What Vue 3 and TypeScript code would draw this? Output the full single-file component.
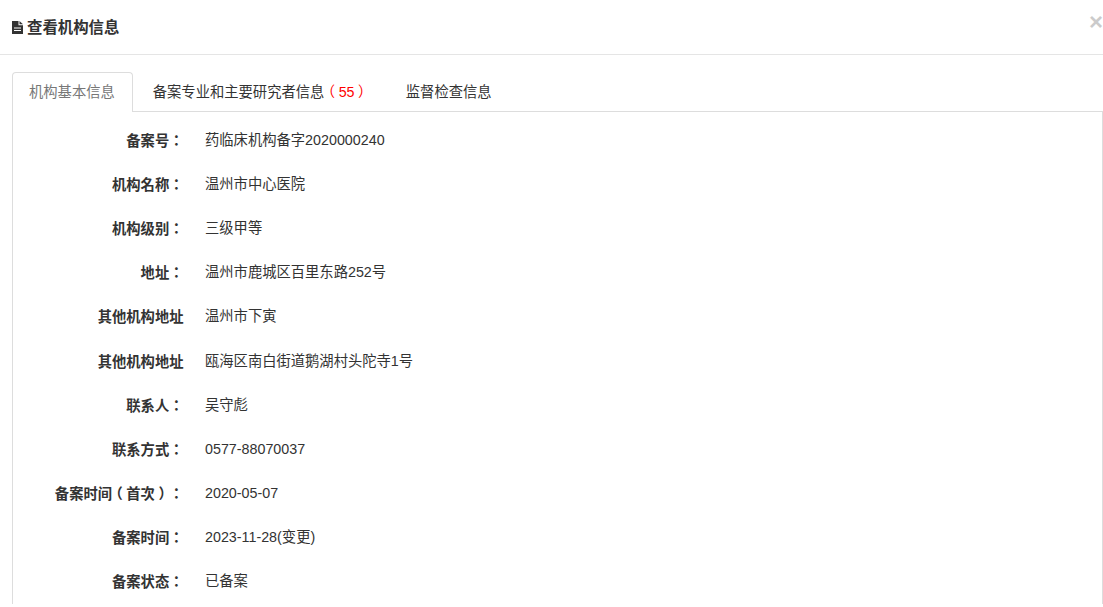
<script setup lang="ts">
const rows: [string, string][] = [
  ['备案号：', '药临床机构备字2020000240'],
  ['机构名称：', '温州市中心医院'],
  ['机构级别：', '三级甲等'],
  ['地址：', '温州市鹿城区百里东路252号'],
  ['其他机构地址', '温州市下寅'],
  ['其他机构地址', '瓯海区南白街道鹅湖村头陀寺1号'],
  ['联系人：', '吴守彪'],
  ['联系方式：', '0577-88070037'],
  ['备案时间（首次）：', '2020-05-07'],
  ['备案时间：', '2023-11-28(变更)'],
  ['备案状态：', '已备案'],
]

// Full-width brackets sit centred in their cell in the reference.
function parts(text: string): { t: string; c: string }[] {
  return text
    .split(/([（）])/)
    .filter((t) => t !== '')
    .map((t) => ({ t, c: t === '（' || t === '）' ? 'paren' : '' }))
}
</script>

<template>
  <div class="modal">
    <header class="head">
      <h4 class="title">
        <svg class="icon" width="11" height="13" viewBox="0 0 11 13" aria-hidden="true">
          <path fill="#333" d="M0 0h6.5v4.2H11V13H0z" />
          <path fill="#333" d="M7.5 0 11 3.2H7.5z" />
          <path fill="#fff" d="M2 6.5h7v1H2zM2 9h7v1H2z" />
        </svg>
        <span>查看机构信息</span>
      </h4>
      <span class="close">×</span>
    </header>
    <div class="body">
      <ul class="tabs">
        <li class="tab active">机构基本信息</li>
        <li class="tab">备案专业和主要研究者信息<span class="count"><span v-for="(p, j) in parts('（55）')" :key="j" :class="p.c">{{ p.t }}</span></span></li>
        <li class="tab">监督检查信息</li>
      </ul>
      <div class="panel">
        <div v-for="(r, i) in rows" :key="i" class="row">
          <div class="label"><span v-for="(p, j) in parts(r[0])" :key="j" :class="p.c">{{ p.t }}</span></div>
          <div class="value">{{ r[1] }}</div>
        </div>
      </div>
    </div>
  </div>
</template>

<style>
html, body { margin: 0; height: 100%; overflow: hidden; background: #fff; }
</style>

<style scoped>
.modal {
  width: 1103px;
  height: 607px;
  overflow: hidden;
  font-family: "Liberation Sans", "Noto Sans CJK SC", sans-serif;
  font-size: 14.3px;
  line-height: 20px;
  color: #333;
  background: #fff;
  text-spacing-trim: space-all;
}
.head {
  height: 54px;
  box-sizing: content-box;
  border-bottom: 1px solid #e5e5e5;
  display: flex;
  justify-content: space-between;
  align-items: flex-start;
}
.title {
  margin: 18px 0 0 12px;
  font-size: 15.4px;
  line-height: 20px;
  font-weight: 700;
  display: flex;
  align-items: center;
  gap: 4px;
}
.icon { margin-top: -1px; }
.close {
  margin: 11px 0 0 0;
  font-size: 24px;
  line-height: 21px;
  font-weight: 700;
  color: #000;
  opacity: 0.2;
}
.body { padding: 17px 0 0 12px; }
.tabs {
  display: flex;
  list-style: none;
  margin: 0;
  padding: 0;
  border-bottom: 1px solid #ddd;
  height: 39px;
}
.tab {
  height: 39px;
  padding: 9px 16px 0;
  margin-right: 3px;
  box-sizing: border-box;
  border: 1px solid transparent;
  border-bottom: 0;
  border-radius: 4px 4px 0 0;
  white-space: nowrap;
}
.tab.active {
  height: 40px;
  padding-right: 17px;
  color: #777;
  background: #fff;
  border-color: #ddd;
}
.count {
  color: #f00;
  font-family: "Liberation Sans", "Noto Sans CJK TC", sans-serif;
}
.paren {
  font-feature-settings: "halt";
  padding: 0 3.57px;
}
.panel {
  border-left: 1px solid #ddd;
  border-right: 1px solid #ddd;
  padding-top: 6.8px;
}
.row {
  display: flex;
  height: 44.15px;
  align-items: flex-start;
  padding-top: 11px;
  box-sizing: border-box;
}
.label {
  width: 170.5px;
  text-align: right;
  font-weight: 700;
  white-space: nowrap;
  font-family: "Liberation Sans", "Noto Sans CJK TC", sans-serif;
  padding-top: 1px;
}
.value {
  margin-left: 21.5px;
  white-space: nowrap;
}
</style>
